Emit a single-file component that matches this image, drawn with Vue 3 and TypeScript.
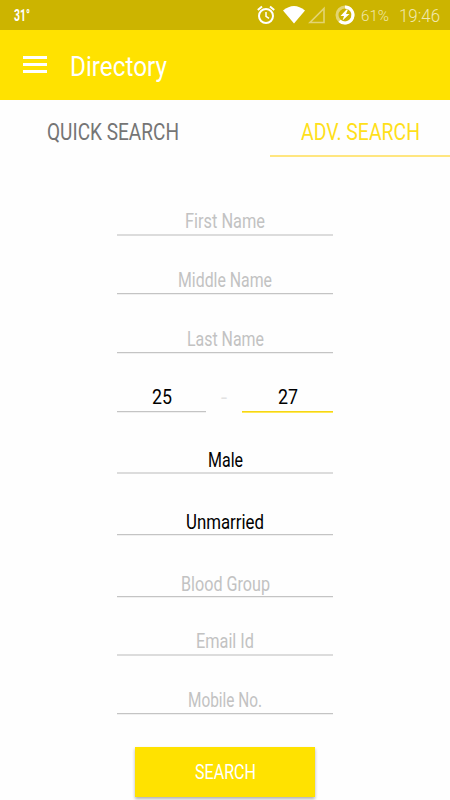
<script setup lang="ts">
import { h } from 'vue'

interface FitProps { text: string; width: number; height: number; base: number }

// A line of text condensed to a given width.
const FitText = (p: FitProps) =>
  h('svg', { width: p.width, height: p.height }, [
    h('text', { x: 0, y: p.base, textLength: p.width, lengthAdjust: 'spacingAndGlyphs', fill: 'currentColor' }, p.text),
  ])
FitText.props = ['text', 'width', 'height', 'base']

interface Cell { text: string; width: number; kind: 'hint' | 'value'; line: 'soft' | 'thin' | 'focus' | 'none'; off: number; cls?: string }
interface Row { height: number; cells: Cell[] }

const one = (height: number, text: string, width: number, kind: Cell['kind'], line: Cell['line'], off: number): Row => ({
  height,
  cells: [{ text, width, kind, line, off }],
})

const rows: Row[] = [
  one(59, 'First Name', 80, 'hint', 'soft', 8.5),
  one(59, 'Middle Name', 94, 'hint', 'thin', 8.5),
  one(59, 'Last Name', 77, 'hint', 'thin', 8.5),
  {
    height: 59,
    cells: [
      { text: '25', width: 20, kind: 'value', line: 'thin', off: 9, cls: 'from' },
      { text: '-', width: 6, kind: 'hint', line: 'none', off: 9, cls: 'dash' },
      { text: '27', width: 20, kind: 'value', line: 'focus', off: 9, cls: 'to' },
    ],
  },
  one(61, 'Male', 35, 'value', 'soft', 7),
  one(62, 'Unmarried', 78, 'value', 'thin', 7.5),
  one(62, 'Blood Group', 89, 'hint', 'thin', 7.5),
  one(58, 'Email Id', 58, 'hint', 'soft', 8.5),
  one(59, 'Mobile No.', 74, 'hint', 'thin', 8.5),
]
</script>

<template>
  <div class="screen">
    <div class="status">
      <FitText class="temp" text="31°" :width="16" :height="30" :base="21" />
      <div class="icons">
        <svg class="alarm" width="18" height="20" viewBox="0 0 18 20" fill="none" stroke="#fff">
          <circle cx="9" cy="11" r="7" stroke-width="2" />
          <path d="M.8 5 5 1.5M17.2 5 13 1.5" stroke-width="2" />
          <path d="M9 7v4.4l3 2" stroke-width="1.5" />
        </svg>
        <svg class="wifi" width="22" height="18" viewBox="0 0 22 18" fill="#fff"><path d="M0 4.5Q11-4.5 22 4.500L11 17.500Z" /></svg>
        <svg class="signal" width="18" height="18" viewBox="0 0 18 18" fill="none" stroke="#e3d472" stroke-width="1.6"><path d="M16 2.500V16.500H2Z" /></svg>
        <svg class="battery" width="20" height="20" viewBox="0 0 20 20">
          <circle cx="10" cy="10" r="8" fill="none" stroke="#e3d472" stroke-width="3" />
          <path d="M10 2A8 8 0 1 1 4.500 15.800" fill="none" stroke="#fff" stroke-width="3" />
          <path d="M11.500 4.500 5.500 11H9L7.500 15.500 14.500 9H11L13 4.500Z" fill="#fff" />
        </svg>
        <FitText class="pct" text="61%" :width="28" :height="30" :base="21" />
        <FitText class="clock" text="19:46" :width="41" :height="30" :base="22" />
      </div>
    </div>

    <header class="bar">
      <div class="burger"><i></i><i></i><i></i></div>
      <FitText class="title" text="Directory" :width="97" :height="70" :base="45.5" />
    </header>

    <nav class="tabs">
      <div class="tab quick"><FitText text="QUICK SEARCH" :width="132" :height="55" :base="40" /></div>
      <div class="tab adv"><FitText text="ADV. SEARCH" :width="119" :height="55" :base="40" /></div>
    </nav>

    <main class="form">
      <div v-for="(row, i) in rows" :key="i" class="row" :style="{ height: row.height + 'px' }">
        <div v-for="c in row.cells" :key="c.text" class="cell" :class="[c.kind, c.cls]">
          <FitText :text="c.text" :width="c.width" :height="28" :base="30 - c.off" />
          <div class="line" :class="c.line"></div>
        </div>
      </div>
    </main>

    <button class="search"><FitText text="SEARCH" :width="61" :height="50" :base="32" /></button>
  </div>
</template>

<style>
body {
  background: #fefefe;
  overflow: hidden;
}
</style>

<style scoped>
.screen {
  width: 450px;
  height: 800px;
  overflow: hidden;
  background: #fefefe;
  font-family: Roboto, "Liberation Sans", sans-serif;
  display: flex;
  flex-direction: column;
}
svg {
  display: block;
  flex: none;
  overflow: visible;
}
.status {
  flex: none;
  height: 30px;
  background: #ccb400;
  color: #fff;
  display: flex;
  justify-content: space-between;
  padding: 0 10px 0 14px;
}
.temp {
  font-size: 17px;
  font-weight: 700;
}
.icons {
  display: flex;
  align-items: flex-start;
}
.alarm { margin: 5px 8px 0 0; }
.wifi { margin: 6px 3px 0 0; }
.signal { margin: 6px 9px 0 0; }
.battery { margin: 5px 6px 0 0; }
.pct {
  font-size: 15.5px;
  font-weight: 300;
  color: #f0e8ae;
  margin-right: 10px;
}
.clock {
  font-size: 18.5px;
  font-weight: 300;
  color: #f0e8ae;
}
.bar {
  flex: none;
  height: 70px;
  background: #ffe200;
  color: #fff;
  display: flex;
  padding-left: 23px;
}
.burger {
  width: 24px;
  margin: 26px 23px 0 0;
  display: flex;
  flex-direction: column;
  gap: 4px;
}
.burger i {
  height: 3px;
  background: #fff;
}
.title {
  font-size: 28px;
}
.tabs {
  flex: none;
  height: 57px;
  display: flex;
  font-size: 23px;
}
.tab {
  box-sizing: border-box;
}
.quick {
  width: 270px;
  padding-left: 46.5px;
  color: #757575;
}
.adv {
  width: 180px;
  padding-left: 31px;
  color: #ffe01a;
  border-bottom: 2px solid #ffe680;
}
.form {
  flex: none;
  width: 216px;
  height: 538px;
  margin: 20px 0 0 117px;
  font-size: 19.5px;
}
.row {
  display: flex;
  align-items: flex-end;
  justify-content: space-between;
}
.cell {
  flex: 1;
  display: flex;
  flex-direction: column;
  align-items: center;
}
.hint { color: #c2c2c2; }
.value { color: #000; }
.from { flex: 0 0 89px; }
.to { flex: 0 0 91px; }
.dash {
  flex: 0 0 36px;
  color: #e2e2e2;
}
.line {
  align-self: stretch;
  height: 2px;
}
.soft { background: #dcdcdc; }
.thin { background: linear-gradient(#c4c4c4 50%, #f0f0f0 50%); }
.focus { background: linear-gradient(#f5d516 50%, #ffe957 50%); }
.search {
  flex: none;
  width: 180px;
  height: 50px;
  margin: 32px 0 0 135px;
  padding: 0;
  border: 0;
  background: #ffe200;
  color: #fff;
  font-family: inherit;
  font-size: 20px;
  display: flex;
  justify-content: center;
  box-shadow: 0 2px 3px rgba(0, 0, 0, 0.3);
}
</style>
